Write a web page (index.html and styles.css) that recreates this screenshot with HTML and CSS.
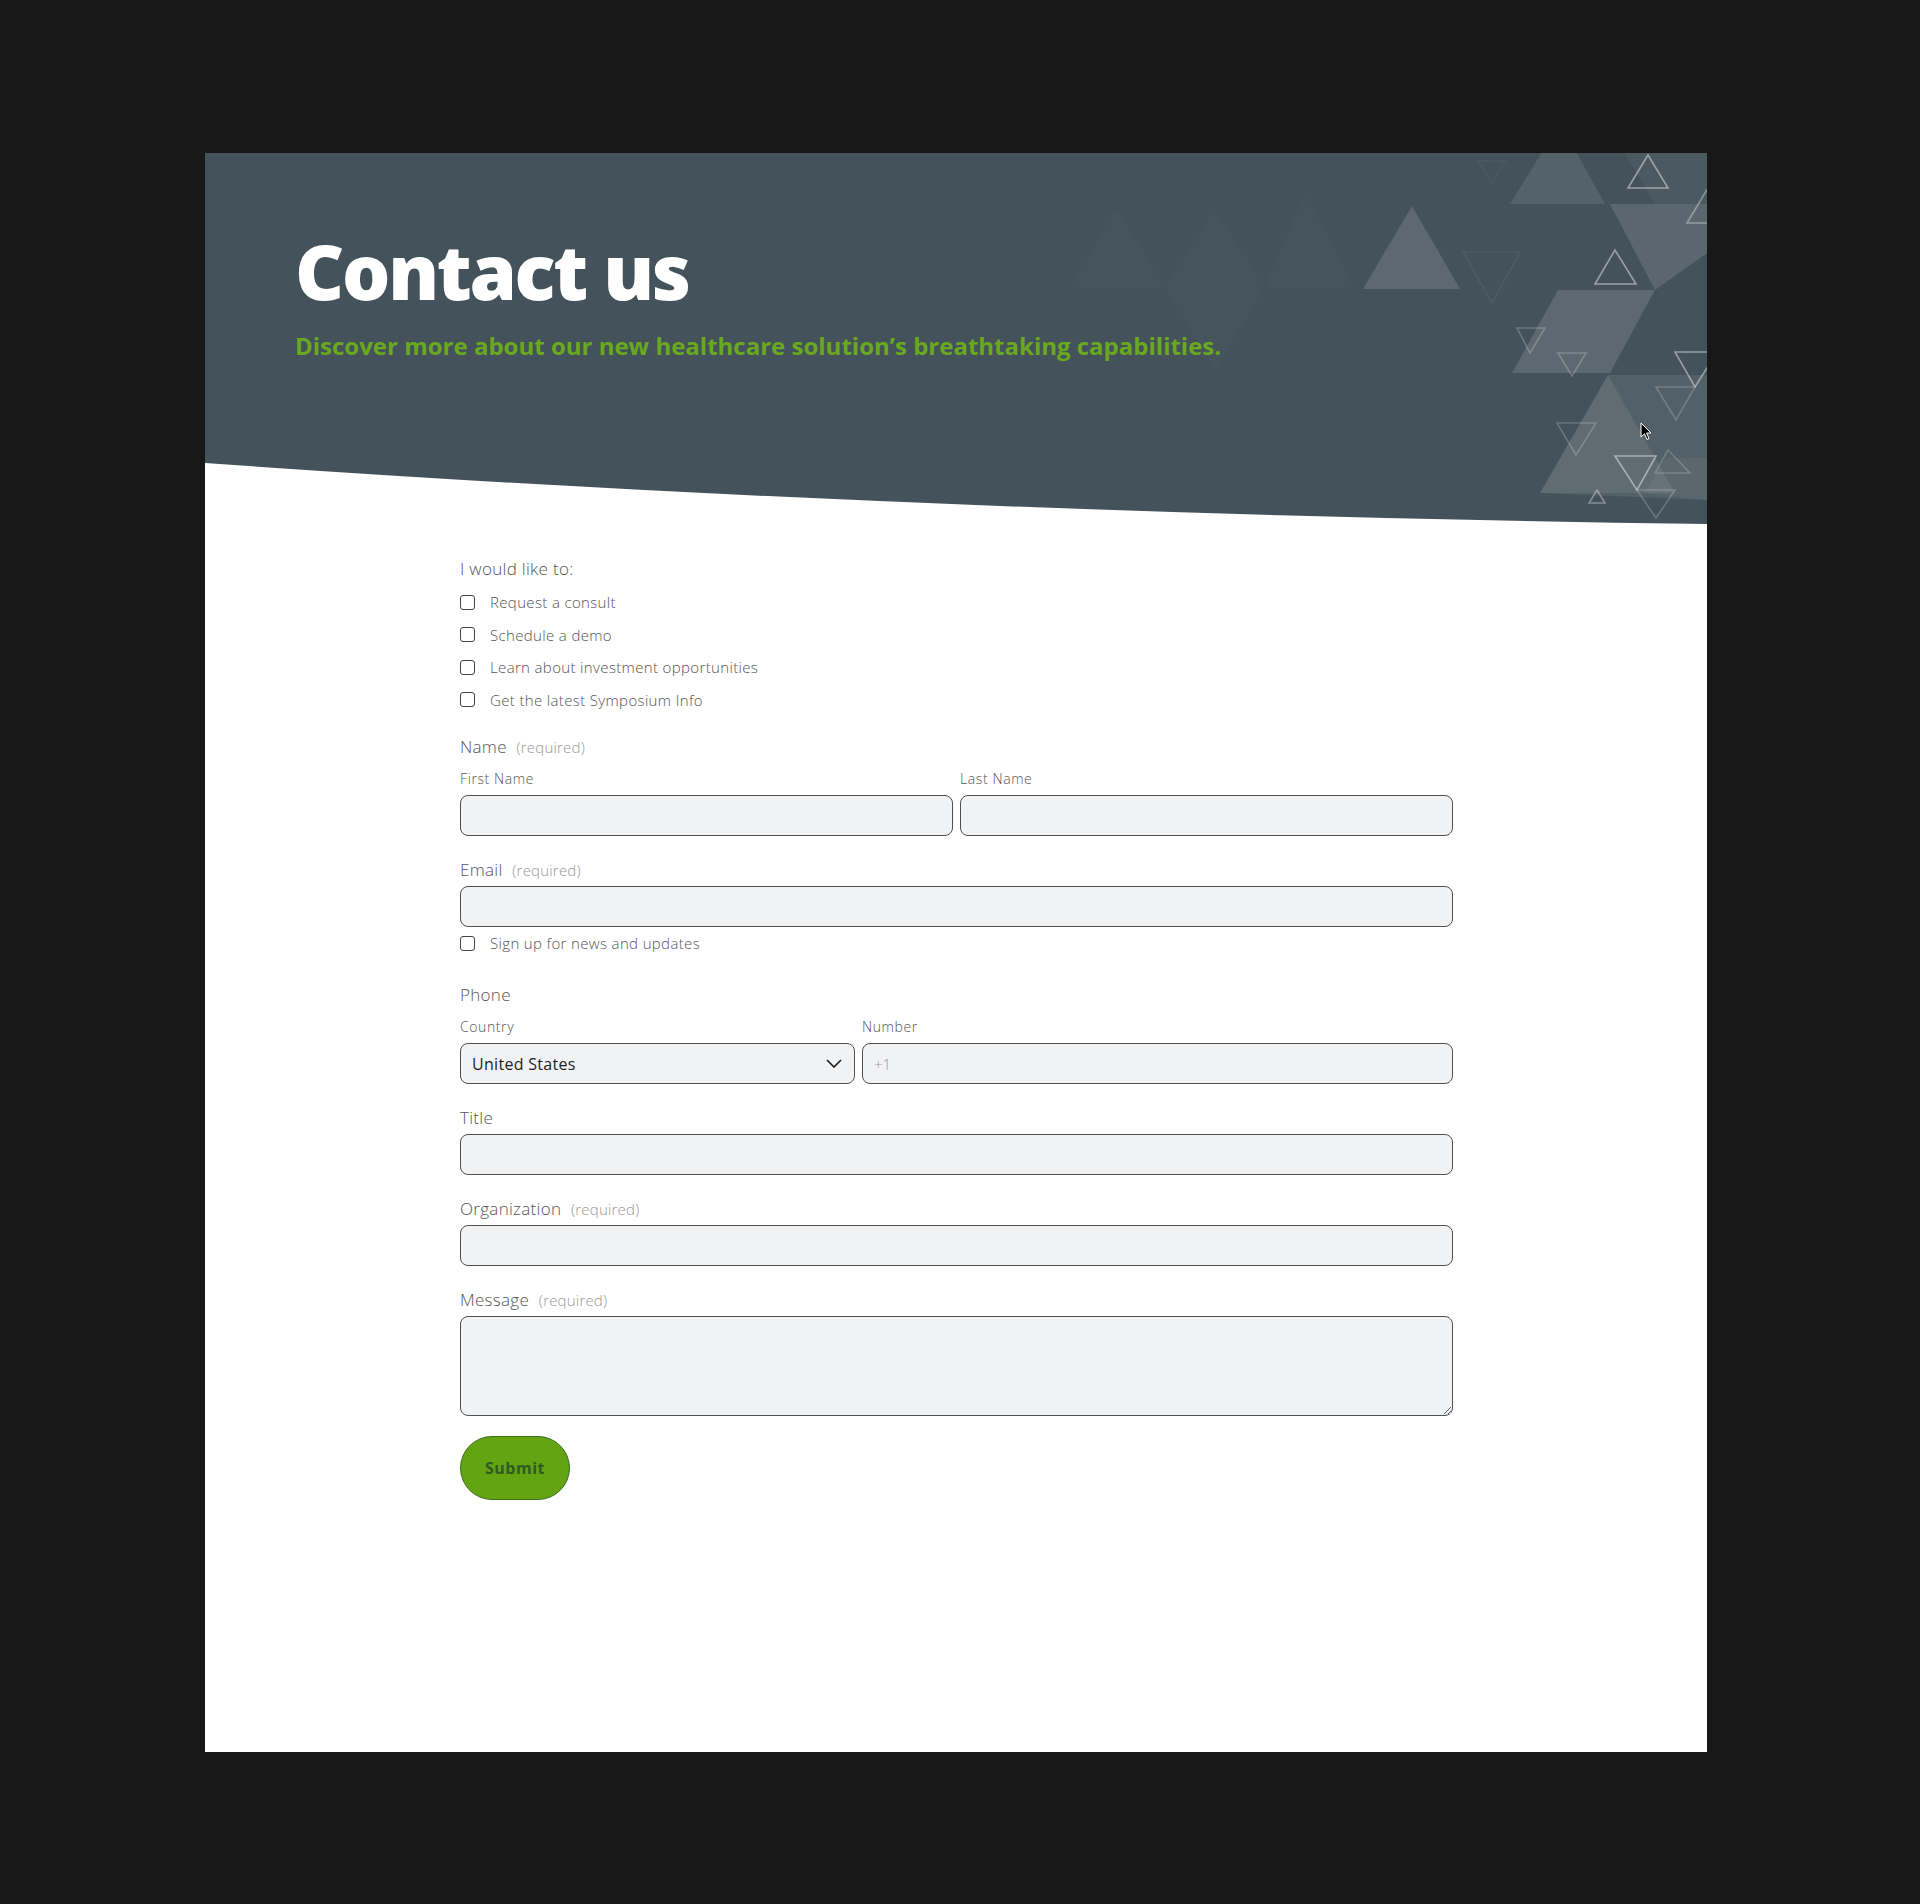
FILE: index.html
```html
<!DOCTYPE html>
<html lang="en">
<head>
<meta charset="utf-8">
<title>Contact us</title>
<link rel="stylesheet" href="styles.css">
</head>
<body>
<div class="page">
  <header class="hero">
    <svg class="hero-art" viewBox="0 0 1502 372" width="1502" height="372" aria-hidden="true">
      <g fill="#ffffff">
        <polygon points="912,57 865,134 960,134" opacity="0.015"/>
        <polygon points="1010,57 960,134 1010,217 1060,134" opacity="0.012"/>
        <polygon points="1100,40 1060,134 1150,134" opacity="0.01"/>
        <polygon points="1207,53 1158,136 1255,136" opacity="0.13"/>
        <polygon points="1355,-30 1305,51 1400,51" opacity="0.09"/>
        <polygon points="1405,51 1502,51 1502,100 1450,137" opacity="0.12"/>
        <polygon points="1420,0 1502,0 1502,51 1450,51" opacity="0.04"/>
        <polygon points="1353,137 1450,137 1405,220 1307,220" opacity="0.13"/>
        <polygon points="1403,222 1335,340 1502,347 1502,222" opacity="0.08"/>
        <polygon points="1403,222 1335,340 1470,340" opacity="0.08"/>
        <polygon points="1460,305 1502,305 1502,347 1440,340" opacity="0.05"/>
      </g>
      <g fill="none" stroke="#ffffff" stroke-width="1.6">
        <polygon points="1443,2 1423,35 1463,35" stroke-opacity="0.45"/>
        <polygon points="1410,97 1390,131 1431,131" stroke-opacity="0.45"/>
        <polygon points="1470,199 1512,199 1490,234" stroke-opacity="0.45"/>
        <polygon points="1410,303 1451,303 1432,337" stroke-opacity="0.45"/>
        <polygon points="1506,30 1482,70 1530,70" stroke-opacity="0.35"/>
        <polygon points="1312,175 1340,175 1325,200" stroke-opacity="0.22"/>
        <polygon points="1353,200 1381,200 1367,223" stroke-opacity="0.22"/>
        <polygon points="1352,270 1391,270 1371,302" stroke-opacity="0.2"/>
        <polygon points="1451,234 1490,234 1471,267" stroke-opacity="0.2"/>
        <polygon points="1463,297 1450,320 1485,320" stroke-opacity="0.18"/>
        <polygon points="1392,337 1384,350 1400,350" stroke-opacity="0.35"/>
        <polygon points="1432,337 1470,337 1451,365" stroke-opacity="0.2"/>
        <polygon points="1258,99 1315,99 1287,150" stroke-opacity="0.05"/>
        <polygon points="1273,8 1300,8 1287,30" stroke-opacity="0.04"/>
      </g>
      <path d="M0,310 Q700,360 1502,371 L1502,372 L0,372 Z" fill="#ffffff"/>
    </svg>
    <svg class="cursor" viewBox="0 0 12 19" width="12" height="19" aria-hidden="true">
      <path d="M1,1 L1,15 L4.5,11.8 L7,17.5 L9,16.6 L6.6,11 L11,11 Z" fill="#000" stroke="#fff" stroke-width="1"/>
    </svg>
    <div class="hero-text">
      <h1 class="title">Contact us</h1>
      <p class="subtitle">Discover more about our new healthcare solution’s breathtaking capabilities.</p>
    </div>
  </header>

  <form class="form">
    <div class="intro">I would like to:</div>
    <div class="choices">
      <label class="check"><span class="box"></span><span>Request a consult</span></label>
      <label class="check"><span class="box"></span><span>Schedule a demo</span></label>
      <label class="check"><span class="box"></span><span>Learn about investment opportunities</span></label>
      <label class="check"><span class="box"></span><span>Get the latest Symposium Info</span></label>
    </div>

    <div class="group group-name">
      <div class="legend">Name <span class="req">(required)</span></div>
      <div class="row two">
        <div class="col">
          <div class="sub">First Name</div>
          <div class="field"></div>
        </div>
        <div class="col">
          <div class="sub">Last Name</div>
          <div class="field"></div>
        </div>
      </div>
    </div>

    <div class="group group-email">
      <div class="legend">Email <span class="req">(required)</span></div>
      <div class="field"></div>
      <label class="check signup"><span class="box"></span><span>Sign up for news and updates</span></label>
    </div>

    <div class="group group-phone">
      <div class="legend">Phone</div>
      <div class="row phone">
        <div class="col">
          <div class="sub">Country</div>
          <div class="field select">
            <span class="value">United States</span>
            <svg class="chev" viewBox="0 0 16 9" width="16" height="9" aria-hidden="true">
              <path d="M1,1 L8,8 L15,1" fill="none" stroke="#1a1a1a" stroke-width="1.6"/>
            </svg>
          </div>
        </div>
        <div class="col">
          <div class="sub">Number</div>
          <div class="field"><span class="ph">+1</span></div>
        </div>
      </div>
    </div>

    <div class="group group-tight">
      <div class="legend">Title</div>
      <div class="field"></div>
    </div>

    <div class="group group-tight">
      <div class="legend">Organization <span class="req">(required)</span></div>
      <div class="field"></div>
    </div>

    <div class="group group-tight">
      <div class="legend">Message <span class="req">(required)</span></div>
      <textarea class="field area"></textarea>
    </div>

    <button type="button" class="submit">Submit</button>
  </form>
</div>
</body>
</html>
```
FILE: styles.css
```css
* { box-sizing: border-box; }
html, body { margin: 0; padding: 0; }
body {
  background: #181818;
  font-family: "Open Sans", "DejaVu Sans", sans-serif;
  width: 1920px;
  height: 1904px;
  overflow: hidden;
}
.page {
  margin: 153px 0 0 205px;
  width: 1502px;
  height: 1599px;
  background: #ffffff;
}
.hero {
  position: relative;
  height: 371px;
  background: #44535b;
  overflow: hidden;
}
.hero-art {
  position: absolute;
  left: 0;
  top: 0;
  display: block;
}
.cursor {
  position: absolute;
  left: 1435px;
  top: 269px;
}
.hero-text {
  position: relative;
  padding: 78px 0 0 90px;
}
.title {
  margin: 0;
  font-size: 76px;
  line-height: 80px;
  font-weight: 800;
  color: #ffffff;
  letter-spacing: -2.3px;
}
.subtitle {
  margin: 20px 0 0 0;
  font-size: 24px;
  line-height: 30px;
  font-weight: 700;
  color: #6aa81e;
  letter-spacing: 0;
}
.form {
  margin-left: 255px;
  width: 993px;
  padding-top: 33px;
  color: #555555;
}
.intro, .legend {
  font-size: 17px;
  line-height: 24px;
  font-weight: 300;
  color: #555555;
  letter-spacing: 0.3px;
}
.req {
  color: #999999;
  font-size: 15px;
  margin-left: 5px;
  letter-spacing: 0.2px;
}
.choices {
  display: flex;
  flex-direction: column;
  gap: 12.5px;
  margin-top: 11px;
}
.check {
  display: flex;
  align-items: center;
  gap: 15px;
  height: 20px;
  font-size: 15px;
  font-weight: 300;
  color: #555555;
  letter-spacing: 0.35px;
}
.box {
  width: 15px;
  height: 15px;
  border: 1.3px solid #444;
  border-radius: 3px;
  flex: none;
}
.group { margin-top: 23px; }
.group-name { margin-top: 25.5px; }
.group-email { margin-top: 22px; }
.group-phone { margin-top: 30px; }
.group-tight { margin-top: 22px; }
.group > .legend { margin-bottom: 4px; }
.group-name > .legend, .group-phone > .legend { margin-bottom: 11px; }
.row { display: grid; gap: 7px; }
.row.two { grid-template-columns: 1fr 1fr; }
.row.phone { grid-template-columns: 395px 1fr; }
.sub {
  font-size: 14px;
  line-height: 18px;
  font-weight: 300;
  color: #555555;
  margin-bottom: 7px;
  letter-spacing: 0.6px;
}
.field {
  display: flex;
  align-items: center;
  height: 41px;
  width: 100%;
  background: #f1f2f4;
  border: 1px solid #4f4f4f;
  border-radius: 8px;
  padding: 0 11px;
  font-family: inherit;
}
.signup { margin-top: 6px; }
.select {
  position: relative;
  justify-content: space-between;
}
.value {
  font-size: 16px;
  font-weight: 400;
  color: #1e1e1e;
  letter-spacing: 0.3px;
}
.chev { margin-right: 1px; }
.ph {
  font-size: 15px;
  font-weight: 300;
  color: #9a9a9a;
}
.area {
  display: block;
  height: 100px;
  resize: vertical;
  margin: 0;
}
.submit {
  margin-top: 20px;
  width: 110px;
  height: 64px;
  border-radius: 32px;
  background: #62a412;
  border: 1px solid #3e6d1c;
  color: #2f5a22;
  font-family: inherit;
  font-size: 16px;
  font-weight: 700;
  padding: 0;
  letter-spacing: 0.5px;
}
```
